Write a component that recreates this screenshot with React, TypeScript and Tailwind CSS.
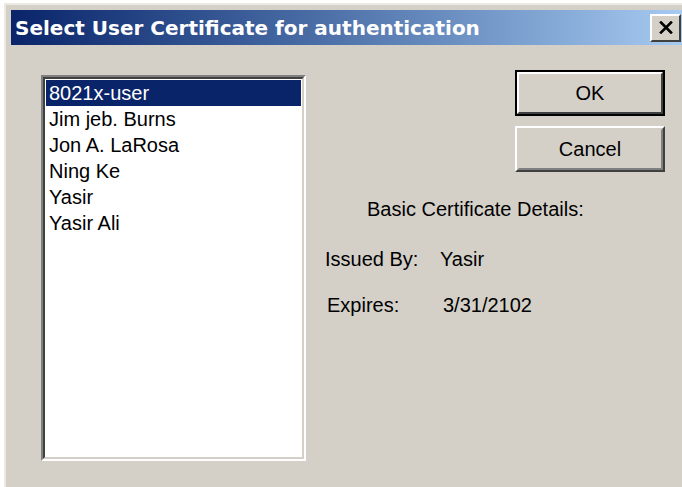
const certificates = ['8021x-user', 'Jim jeb. Burns', 'Jon A. LaRosa', 'Ning Ke', 'Yasir', 'Yasir Ali']

function CloseGlyph() {
  return (
    <svg width="14" height="13" viewBox="0 0 14 13">
      <path d="M2 1.5 L12 11.5 M12 1.5 L2 11.5" stroke="#000" strokeWidth="2.6" strokeLinecap="square" />
    </svg>
  )
}

function Win2kButton({ label, isDefault }: { label: string; isDefault?: boolean }) {
  if (isDefault) {
    return (
      <div className="h-[46px] w-[150px] border-2 border-black">
        <div className="flex h-full w-full items-center justify-center border-2 border-t-white border-l-white border-r-[#404040] border-b-[#404040] text-[20px] text-black">
          {label}
        </div>
      </div>
    )
  }
  return (
    <div className="h-[46px] w-[150px] border-2 border-t-white border-l-white border-r-[#404040] border-b-[#404040]">
      <div className="flex h-full w-full items-center justify-center border-2 border-t-[#d4d0c8] border-l-[#d4d0c8] border-r-[#808080] border-b-[#808080] text-[20px] text-black">
        {label}
      </div>
    </div>
  )
}

export default function App() {
  const selected = 0

  return (
    <div
      className="h-[487px] w-[682px] overflow-hidden bg-white pl-[4px] pt-[3px]"
      style={{ fontFamily: '"Liberation Sans", Arial, sans-serif' }}
    >
      <div className="h-[500px] w-[700px] border-t-2 border-l-2 border-[#ece9e4] bg-[#d4d0c8] pl-[5px] pt-[5px]">
        {/* caption bar */}
        <div className="flex h-[35px] w-[671px] items-center justify-between bg-gradient-to-r from-[#0a246a] to-[#a6caf0] pl-[4px]">
          <span
            className="text-[20px] font-bold text-white"
            style={{ fontFamily: '"DejaVu Sans", Tahoma, sans-serif' }}
          >
            Select User Certificate for authentication
          </span>
          <div className="mr-[1px] flex h-[28px] w-[31px] items-center justify-center border-2 border-t-white border-l-white border-r-[#404040] border-b-[#404040] bg-[#d4d0c8]">
            <CloseGlyph />
          </div>
        </div>

        {/* dialog body */}
        <div className="flex items-start pl-[30px] pt-[25px]">
          <div className="mt-[5px] h-[386px] w-[265px] border-2 border-t-[#808080] border-l-[#808080] border-r-white border-b-white">
            <div className="h-full w-full border-2 border-t-[#404040] border-l-[#404040] border-r-[#d4d0c8] border-b-[#d4d0c8] bg-white pt-[1px] pl-[1px] pr-[1px]">
              {certificates.map((name, i) => (
                <div
                  key={name}
                  className={
                    i === selected
                      ? 'flex h-[26px] items-center bg-[#0a246a] pl-[3px] text-[20px] text-white'
                      : 'flex h-[26px] items-center pl-[3px] text-[20px] text-black'
                  }
                >
                  {name}
                </div>
              ))}
            </div>
          </div>

          <div className="flex w-[359px] flex-col pl-[19px] text-[20px] text-black">
            <div className="flex flex-col items-end gap-[10px]">
              <Win2kButton label="OK" isDefault />
              <Win2kButton label="Cancel" />
            </div>
            <div className="mt-[25px] ml-[42px] leading-[24px]">Basic Certificate Details:</div>
            <div className="mt-[26px] flex leading-[24px]">
              <span className="w-[115px]">Issued By:</span>
              <span>Yasir</span>
            </div>
            <div className="mt-[22px] ml-[2px] flex leading-[24px]">
              <span className="w-[116px]">Expires:</span>
              <span>3/31/2102</span>
            </div>
          </div>
        </div>
      </div>
    </div>
  )
}
